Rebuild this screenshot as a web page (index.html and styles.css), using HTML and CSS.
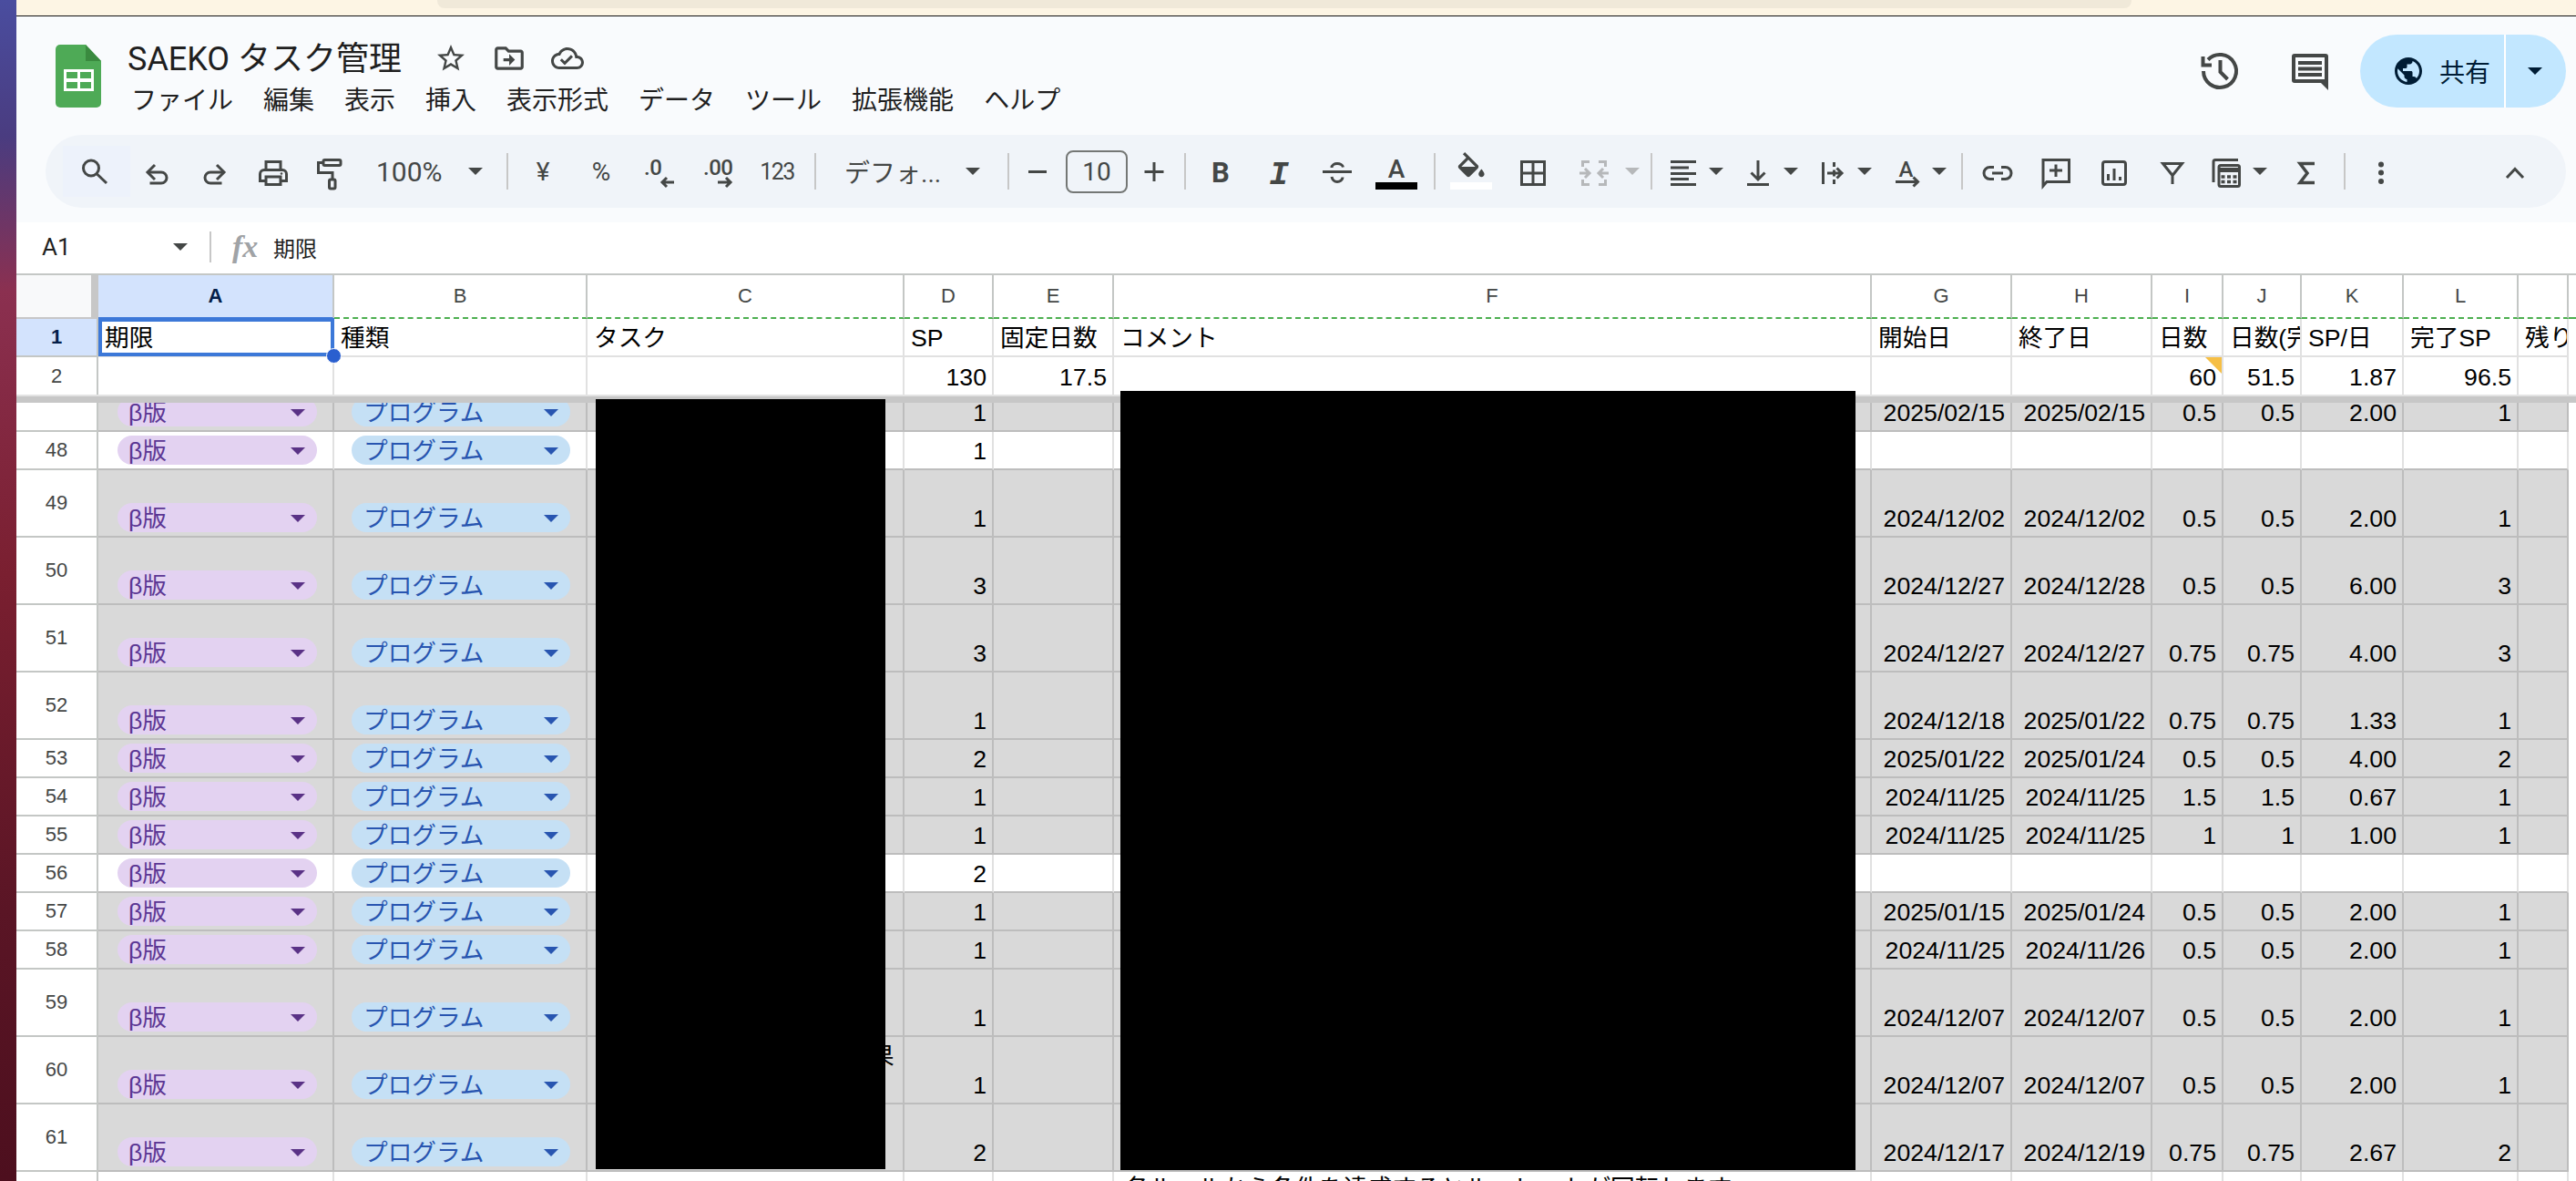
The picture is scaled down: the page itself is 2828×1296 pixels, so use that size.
FILE: index.html
```html
<!DOCTYPE html>
<html lang="ja">
<head>
<meta charset="utf-8">
<title>SAEKO タスク管理</title>
<link rel="stylesheet" href="styles.css">
</head>
<body>
<div class="strip"></div>
<main class="main">
  <div class="banner"><div class="banner-bar"></div></div>
  <header class="head">
    <div class="appbar">
      <svg class="logo" viewBox="0 0 50 69"><path class="logo-body" d="M5 0H33L50 18V64a5 5 0 0 1-5 5H5a5 5 0 0 1-5-5V5a5 5 0 0 1 5-5z"/><path class="logo-fold" d="M33 0L50 18H33z"/><path class="logo-table" d="M9 27h33v24H9zM12 30v7h12v-7zM27 30v7h12v-7zM12 41v7h12v-7zM27 41v7h12v-7z"/></svg>
      <div class="names">
        <div class="title-row">
          <span class="title">SAEKO タスク管理</span>
          <svg class="ticon star" viewBox="0 0 24 24"><path d="M22 9.24l-7.19-.62L12 2 9.19 8.63 2 9.24l5.46 4.73L5.82 21 12 17.27 18.18 21l-1.63-7.03L22 9.24zM12 15.4l-3.76 2.27 1-4.28-3.32-2.88 4.38-.38L12 6.1l1.71 4.04 4.38.38-3.32 2.88 1 4.28L12 15.4z"/></svg>
          <svg class="ticon folder" viewBox="0 0 24 24"><path d="M20 6h-8l-2-2H4c-1.11 0-1.99.89-1.99 2L2 18c0 1.11.89 2 2 2h16c1.11 0 2-.89 2-2V8c0-1.11-.89-2-2-2zm0 12H4V6h5.17l2 2H20v10zM12.01 12H8v2h4.01v3L16 13l-3.99-4z"/></svg>
          <svg class="ticon cloud" viewBox="0 0 24 24"><path d="M19.35 10.04C18.67 6.59 15.64 4 12 4 9.11 4 6.6 5.64 5.35 8.04 2.34 8.36 0 10.91 0 14c0 3.31 2.69 6 6 6h13c2.76 0 5-2.24 5-5 0-2.64-2.05-4.78-4.65-4.96zM19 18H6c-2.21 0-4-1.79-4-4 0-2.05 1.53-3.76 3.56-3.97l1.07-.11.5-.95C8.08 7.14 9.94 6 12 6c2.62 0 4.88 1.86 5.39 4.43l.3 1.5 1.53.11c1.56.1 2.78 1.41 2.78 2.96 0 1.65-1.35 3-3 3zm-9-3.82l-2.09-2.09L6.5 13.5 10 17l6.01-6.01-1.41-1.41z"/></svg>
        </div>
        <nav class="menu"><span>ファイル</span><span>編集</span><span>表示</span><span>挿入</span><span>表示形式</span><span>データ</span><span>ツール</span><span>拡張機能</span><span>ヘルプ</span></nav>
      </div>
      <div class="actions">
        <svg class="ic hist" viewBox="0 0 48 48"><path d="M11 11.5A18 18 0 1 1 6 24"/><path d="M5.5 8v9.5H15"/><path d="M24.5 12v13l8 8"/></svg>
        <svg class="ic comm" viewBox="0 0 48 48"><path class="dk" fill-rule="evenodd" d="M7 5h34a3 3 0 0 1 3 3v37l-8-8H7a3 3 0 0 1-3-3V8a3 3 0 0 1 3-3zM8 9v24h32V9z"/><path class="dk" d="M11 13h26v4H11zM11 19.5h26v4H11zM11 26h26v4H11z"/></svg>
        <div class="share">
          <div class="share-main">
            <svg class="globe" viewBox="0 0 24 24"><path d="M12 2C6.48 2 2 6.48 2 12s4.48 10 10 10 10-4.48 10-10S17.52 2 12 2zm-1 17.93c-3.95-.49-7-3.85-7-7.93 0-.62.08-1.21.21-1.79L9 15v1c0 1.1.9 2 2 2v1.93zm6.9-2.54c-.26-.81-1-1.39-1.9-1.39h-1v-3c0-.55-.45-1-1-1H8v-2h2c.55 0 1-.45 1-1V7h2c1.1 0 2-.9 2-2v-.41c2.93 1.19 5 4.06 5 7.41 0 2.08-.8 3.97-2.1 5.39z"/></svg>
            <span>共有</span>
          </div>
          <div class="share-more"><i class="tri tri-dark"></i></div>
        </div>
      </div>
    </div>

    <div class="toolbar">
      <div class="b64 search"><svg class="ic" viewBox="0 0 48 48"><circle cx="20" cy="20.5" r="8.5"/><path d="M26.5 27 37 37"/></svg></div>
      <div class="b64 ml4"><svg class="ic" viewBox="0 0 48 48"><path d="M22 17l-8 8 8 8"/><path d="M14.5 25H29a6 6 0 0 1 0 12H16.5"/></svg></div>
      <div class="b64"><svg class="ic" viewBox="0 0 48 48"><path d="M26 17l8 8-8 8"/><path d="M33.5 25H19a6 6 0 0 0 0 12h12.5"/></svg></div>
      <div class="b64"><svg class="ic" viewBox="0 0 48 48"><path d="M16 22v-8.5h16V22"/><path d="M16 34.5H9.5V27a4.5 4.5 0 0 1 4.5-4.5h20a4.5 4.5 0 0 1 4.500 4.500v7.500H32"/><path d="M16 30h16v8.5H16z"/><circle class="dk" cx="33" cy="26.5" r="1.3"/></svg></div>
      <div class="b64"><svg class="ic" viewBox="0 0 48 48"><rect x="15" y="11.5" width="19" height="6" rx="1.5"/><path d="M15 14.5H9.5v11H25v7.5"/><rect x="21.5" y="33" width="6.5" height="10" rx="1.5"/></svg></div>
      <div class="zoom"><span>100%</span><i class="tri"></i></div>
      <div class="sep ml16"></div>
      <div class="b64 ml6 tb-text">¥</div>
      <div class="b64 tb-text">%</div>
      <div class="b64"><svg class="ic" viewBox="0 0 48 48"><text class="svt dec" x="7" y="28">.0</text><path d="M40 36H27m5-5-5 5 5 5"/></svg></div>
      <div class="b64"><svg class="ic" viewBox="0 0 48 48"><text class="svt dec" x="8" y="28">.00</text><path d="M24 36h14m-5-5 5 5-5 5"/></svg></div>
      <div class="b64 tb-num">123</div>
      <div class="sep ml10"></div>
      <div class="fontsel ml16"><span>デフォ...</span><i class="tri"></i></div>
      <div class="sep ml20"></div>
      <div class="minus"><svg class="ic" viewBox="0 0 48 48"><path d="M14 24.5h20"/></svg></div>
      <div class="sizebox">10</div>
      <div class="plus"><svg class="ic" viewBox="0 0 48 48"><path d="M13.5 24.5h21M24 14v21"/></svg></div>
      <div class="sep ml4"></div>
      <div class="b64 ml6"><svg class="ic" viewBox="0 0 48 48"><text class="svt bold" x="24" y="36">B</text></svg></div>
      <div class="b64"><svg class="ic" viewBox="0 0 48 48"><text class="svt ital" x="24" y="38">I</text></svg></div>
      <div class="b64"><svg class="ic" viewBox="0 0 48 48"><path d="M8 24.5h32"/><path d="M18 20c0-3 3-4.5 6-4.5s6 1.5 6.5 4"/><path d="M18 30c.5 3 3 5.5 6 5.5s6-2 6-5"/></svg></div>
      <div class="b64"><svg class="ic" viewBox="0 0 48 48"><text class="svt colA" x="25" y="31">A</text><rect class="swatch-k" x="2" y="36" width="46" height="8"/></svg></div>
      <div class="sep ml10"></div>
      <div class="b64 ml7"><svg class="ic" viewBox="0 0 48 48"><path class="dk" transform="translate(5 3) scale(1.6)" d="M16.56 8.94L7.62 0 6.21 1.41l2.38 2.38-5.15 5.15c-.59.59-.59 1.54 0 2.12l5.5 5.5c.29.29.68.44 1.06.44s.77-.15 1.06-.44l5.5-5.5c.59-.58.59-1.53 0-2.12zM5.21 10L10 5.21 14.79 10H5.21zM19 11.5s-2 2.17-2 3.5c0 1.1.9 2 2 2s2-.9 2-2c0-1.33-2-3.5-2-3.5z"/><rect class="swatch-w" x="1" y="36" width="46" height="8"/></svg></div>
      <div class="b64 ml4"><svg class="ic" viewBox="0 0 48 48"><path d="M11.5 13.5h25v25h-25zM24 13.5v25M11.5 26h25"/></svg></div>
      <div class="b64 ml3"><svg class="ic off" viewBox="0 0 48 48"><path d="M19 13.5h-7.5V19M11.5 33v5.5H19M29 13.5h7.5V19M36.5 33v5.5H29"/><path d="M8 26h10m-4-5 5 5-5 5M40 26H30m4-5-5 5 5 5"/></svg></div>
      <div class="car20"><i class="tri tri-off"></i></div>
      <div class="sep ml10"></div>
      <div class="b48 ml10"><svg class="ic" viewBox="0 0 48 48"><path d="M10 13.5h28M10 20h20M10 26.5h28M10 32.5h20M10 38.5h28"/></svg></div>
      <div class="car24"><i class="tri"></i></div>
      <div class="b48 ml10"><svg class="ic" viewBox="0 0 48 48"><path d="M24 12v21M16.5 25.5 24 33l7.5-7.5M12 38.5h24"/></svg></div>
      <div class="car24"><i class="tri"></i></div>
      <div class="b48 ml9"><svg class="ic" viewBox="0 0 48 48"><path d="M14.5 14v24M26.5 14v5M26.5 33v5M26.5 22.5v7M19 26h16M29.5 20.5 35 26l-5.5 5.500"/></svg></div>
      <div class="car24"><i class="tri"></i></div>
      <div class="b48 ml10"><svg class="ic" viewBox="0 0 48 48"><text class="svt rota" x="23.5" y="29.5">A</text><path d="M12 35.5h24M31.5 30.5l5 5-5 5"/></svg></div>
      <div class="car24"><i class="tri"></i></div>
      <div class="sep ml12"></div>
      <div class="b64 ml6"><svg class="ic" viewBox="0 0 48 48"><path d="M20 19.5h-4.500a6.500 6.500 0 0 0 0 13H20M28 19.500h4.500a6.500 6.500 0 0 1 0 13H28M18 26h12"/></svg></div>
      <div class="b64"><svg class="ic" viewBox="0 0 48 48"><path d="M10 11.5h28.500v24H14L10 40z"/><path d="M24 16.5v13.500M17 23h14"/></svg></div>
      <div class="b64"><svg class="ic" viewBox="0 0 48 48"><rect x="11.5" y="13.5" width="25" height="25" rx="2.5"/><path d="M17.5 27v7M24 21v13M30.5 30v4"/></svg></div>
      <div class="b64"><svg class="ic" viewBox="0 0 48 48"><path d="M13.5 15.5h21L24 28.5zM24 28v10"/></svg></div>
      <div class="b48 ml2"><svg class="ic" viewBox="0 0 48 48"><path d="M38 11.5H13a2 2 0 0 0-2 2V36"/><rect x="17" y="17.5" width="22.5" height="23" rx="2"/><path d="M17 21.5h22M17 23.5h22"/><path class="thin" d="M19.5 30h17M19.5 35.5h17" stroke-dasharray="4 2.5"/></svg></div>
      <div class="car24 ml2"><i class="tri"></i></div>
      <div class="b64 ml7"><svg class="ic" viewBox="0 0 48 48"><path class="sig" d="M33 15.5H17l8 10.5-8 10.5h16"/></svg></div>
      <div class="sep ml9"></div>
      <div class="b64 ml7"><svg class="ic" viewBox="0 0 48 48"><circle class="dk" cx="24" cy="16.5" r="3"/><circle class="dk" cx="24" cy="25.5" r="3"/><circle class="dk" cx="24" cy="35" r="3"/></svg></div>
      <div class="b64 collapse"><svg class="ic" viewBox="0 0 48 48"><path d="M15 31l9-9.5 9 9.5"/></svg></div>
    </div>
  </header>

  <div class="formula">
    <span class="cellref">A1</span><i class="tri fx-tri"></i>
    <div class="fx-sep"></div>
    <span class="fx">fx</span>
    <span class="fx-val">期限</span>
  </div>

  <section class="sheet">
    <div class="row rowhead">
      <div class="corner"></div>
      <div class="ch sel">A</div><div class="ch">B</div><div class="ch">C</div><div class="ch">D</div><div class="ch">E</div><div class="ch">F</div><div class="ch">G</div><div class="ch">H</div><div class="ch">I</div><div class="ch">J</div><div class="ch">K</div><div class="ch">L</div><div class="ch"></div><div class="ch end"></div>
    </div>
    <div class="row r42 plain">
      <div class="rh sel">1</div>
      <div class="c a1">期限<div class="selbox"></div><div class="handle"></div></div><div class="c">種類</div><div class="c">タスク</div><div class="c">SP</div><div class="c">固定日数</div><div class="c">コメント</div><div class="c">開始日</div><div class="c">終了日</div><div class="c">日数</div><div class="c">日数(完</div><div class="c">SP/日</div><div class="c">完了SP</div><div class="c">残り</div><div class="e"></div>
    </div>
    <div class="row r41 plain">
      <div class="rh nb">2</div>
      <div class="c nb"></div><div class="c nb"></div><div class="c nb"></div><div class="c n nb">130</div><div class="c n nb">17.5</div><div class="c nb"></div><div class="c nb"></div><div class="c nb"></div><div class="c n nb note">60</div><div class="c n nb">51.5</div><div class="c n nb">1.87</div><div class="c n nb">96.5</div><div class="c nb"></div><div class="e"></div>
    </div>
    <div class="freeze"></div>

    <div class="row r32 gray"><div class="rh"></div><div class="c chip-a"><span class="chip pu">β版<i class="tri"></i></span></div><div class="c chip-b"><span class="chip bl">プログラム<i class="tri"></i></span></div><div class="c"></div><div class="c n">1</div><div class="c"></div><div class="c"></div><div class="c n">2025/02/15</div><div class="c n">2025/02/15</div><div class="c n">0.5</div><div class="c n">0.5</div><div class="c n">2.00</div><div class="c n">1</div><div class="c"></div><div class="e"></div></div>
    <div class="row r42 wht"><div class="rh">48</div><div class="c chip-a"><span class="chip pu">β版<i class="tri"></i></span></div><div class="c chip-b"><span class="chip bl">プログラム<i class="tri"></i></span></div><div class="c"></div><div class="c n">1</div><div class="c"></div><div class="c"></div><div class="c"></div><div class="c"></div><div class="c"></div><div class="c"></div><div class="c"></div><div class="c"></div><div class="c"></div><div class="e"></div></div>
    <div class="row r74 gray"><div class="rh">49</div><div class="c chip-a"><span class="chip pu">β版<i class="tri"></i></span></div><div class="c chip-b"><span class="chip bl">プログラム<i class="tri"></i></span></div><div class="c"></div><div class="c n">1</div><div class="c"></div><div class="c"></div><div class="c n">2024/12/02</div><div class="c n">2024/12/02</div><div class="c n">0.5</div><div class="c n">0.5</div><div class="c n">2.00</div><div class="c n">1</div><div class="c"></div><div class="e"></div></div>
    <div class="row r74 gray"><div class="rh">50</div><div class="c chip-a"><span class="chip pu">β版<i class="tri"></i></span></div><div class="c chip-b"><span class="chip bl">プログラム<i class="tri"></i></span></div><div class="c"></div><div class="c n">3</div><div class="c"></div><div class="c"></div><div class="c n">2024/12/27</div><div class="c n">2024/12/28</div><div class="c n">0.5</div><div class="c n">0.5</div><div class="c n">6.00</div><div class="c n">3</div><div class="c"></div><div class="e"></div></div>
    <div class="row r74 gray"><div class="rh">51</div><div class="c chip-a"><span class="chip pu">β版<i class="tri"></i></span></div><div class="c chip-b"><span class="chip bl">プログラム<i class="tri"></i></span></div><div class="c"></div><div class="c n">3</div><div class="c"></div><div class="c"></div><div class="c n">2024/12/27</div><div class="c n">2024/12/27</div><div class="c n">0.75</div><div class="c n">0.75</div><div class="c n">4.00</div><div class="c n">3</div><div class="c"></div><div class="e"></div></div>
    <div class="row r74 gray"><div class="rh">52</div><div class="c chip-a"><span class="chip pu">β版<i class="tri"></i></span></div><div class="c chip-b"><span class="chip bl">プログラム<i class="tri"></i></span></div><div class="c"></div><div class="c n">1</div><div class="c"></div><div class="c"></div><div class="c n">2024/12/18</div><div class="c n">2025/01/22</div><div class="c n">0.75</div><div class="c n">0.75</div><div class="c n">1.33</div><div class="c n">1</div><div class="c"></div><div class="e"></div></div>
    <div class="row r42 gray"><div class="rh">53</div><div class="c chip-a"><span class="chip pu">β版<i class="tri"></i></span></div><div class="c chip-b"><span class="chip bl">プログラム<i class="tri"></i></span></div><div class="c"></div><div class="c n">2</div><div class="c"></div><div class="c"></div><div class="c n">2025/01/22</div><div class="c n">2025/01/24</div><div class="c n">0.5</div><div class="c n">0.5</div><div class="c n">4.00</div><div class="c n">2</div><div class="c"></div><div class="e"></div></div>
    <div class="row r42 gray"><div class="rh">54</div><div class="c chip-a"><span class="chip pu">β版<i class="tri"></i></span></div><div class="c chip-b"><span class="chip bl">プログラム<i class="tri"></i></span></div><div class="c"></div><div class="c n">1</div><div class="c"></div><div class="c"></div><div class="c n">2024/11/25</div><div class="c n">2024/11/25</div><div class="c n">1.5</div><div class="c n">1.5</div><div class="c n">0.67</div><div class="c n">1</div><div class="c"></div><div class="e"></div></div>
    <div class="row r42 gray"><div class="rh">55</div><div class="c chip-a"><span class="chip pu">β版<i class="tri"></i></span></div><div class="c chip-b"><span class="chip bl">プログラム<i class="tri"></i></span></div><div class="c"></div><div class="c n">1</div><div class="c"></div><div class="c"></div><div class="c n">2024/11/25</div><div class="c n">2024/11/25</div><div class="c n">1</div><div class="c n">1</div><div class="c n">1.00</div><div class="c n">1</div><div class="c"></div><div class="e"></div></div>
    <div class="row r42 wht"><div class="rh">56</div><div class="c chip-a"><span class="chip pu">β版<i class="tri"></i></span></div><div class="c chip-b"><span class="chip bl">プログラム<i class="tri"></i></span></div><div class="c"></div><div class="c n">2</div><div class="c"></div><div class="c"></div><div class="c"></div><div class="c"></div><div class="c"></div><div class="c"></div><div class="c"></div><div class="c"></div><div class="c"></div><div class="e"></div></div>
    <div class="row r42 gray"><div class="rh">57</div><div class="c chip-a"><span class="chip pu">β版<i class="tri"></i></span></div><div class="c chip-b"><span class="chip bl">プログラム<i class="tri"></i></span></div><div class="c"></div><div class="c n">1</div><div class="c"></div><div class="c"></div><div class="c n">2025/01/15</div><div class="c n">2025/01/24</div><div class="c n">0.5</div><div class="c n">0.5</div><div class="c n">2.00</div><div class="c n">1</div><div class="c"></div><div class="e"></div></div>
    <div class="row r42 gray"><div class="rh">58</div><div class="c chip-a"><span class="chip pu">β版<i class="tri"></i></span></div><div class="c chip-b"><span class="chip bl">プログラム<i class="tri"></i></span></div><div class="c"></div><div class="c n">1</div><div class="c"></div><div class="c"></div><div class="c n">2024/11/25</div><div class="c n">2024/11/26</div><div class="c n">0.5</div><div class="c n">0.5</div><div class="c n">2.00</div><div class="c n">1</div><div class="c"></div><div class="e"></div></div>
    <div class="row r74 gray"><div class="rh">59</div><div class="c chip-a"><span class="chip pu">β版<i class="tri"></i></span></div><div class="c chip-b"><span class="chip bl">プログラム<i class="tri"></i></span></div><div class="c"></div><div class="c n">1</div><div class="c"></div><div class="c"></div><div class="c n">2024/12/07</div><div class="c n">2024/12/07</div><div class="c n">0.5</div><div class="c n">0.5</div><div class="c n">2.00</div><div class="c n">1</div><div class="c"></div><div class="e"></div></div>
    <div class="row r74 gray"><div class="rh">60</div><div class="c chip-a"><span class="chip pu">β版<i class="tri"></i></span></div><div class="c chip-b"><span class="chip bl">プログラム<i class="tri"></i></span></div><div class="c wrapend">果</div><div class="c n">1</div><div class="c"></div><div class="c"></div><div class="c n">2024/12/07</div><div class="c n">2024/12/07</div><div class="c n">0.5</div><div class="c n">0.5</div><div class="c n">2.00</div><div class="c n">1</div><div class="c"></div><div class="e"></div></div>
    <div class="row r74 gray"><div class="rh">61</div><div class="c chip-a"><span class="chip pu">β版<i class="tri"></i></span></div><div class="c chip-b"><span class="chip bl">プログラム<i class="tri"></i></span></div><div class="c"></div><div class="c n">2</div><div class="c"></div><div class="c"></div><div class="c n">2024/12/17</div><div class="c n">2024/12/19</div><div class="c n">0.75</div><div class="c n">0.75</div><div class="c n">2.67</div><div class="c n">2</div><div class="c"></div><div class="e"></div></div>
    <div class="row r74 wht"><div class="rh"></div><div class="c"></div><div class="c"></div><div class="c"></div><div class="c"></div><div class="c"></div><div class="c toptext">各ルールから条件を達成するとルーレットが回転します</div><div class="c"></div><div class="c"></div><div class="c"></div><div class="c"></div><div class="c"></div><div class="c"></div><div class="c"></div><div class="e"></div></div>

    <div class="mask mask-c"></div>
    <div class="mask mask-f"></div>
  </section>
</main>
</body>
</html>
```

FILE: styles.css
```css
* { box-sizing: border-box; }
html, body { margin: 0; padding: 0; height: 1296px; overflow: hidden; background: #fff; }
body { display: flex; font-family: "Roboto", "Noto Sans CJK JP", sans-serif; color: #1f1f1f; }
i { font-style: normal; }

.strip { width: 18px; height: 1296px; flex: none; background: linear-gradient(180deg, #4a4d9f 0, #4a3c80 150px, #8b3050 320px, #7a1f30 630px, #5a1525 1000px, #4d0f1e 1296px); }
.main { width: 2810px; flex: none; display: flex; flex-direction: column; height: 1296px; }

.banner { height: 18px; flex: none; background: #fdf5e4; border-bottom: 1px solid #111; }
.banner-bar { margin-left: 462px; width: 1860px; height: 9px; background: #f0e9d9; border-radius: 0 0 8px 8px; }

.head { height: 226px; flex: none; background: #f9fbfd; }
.appbar { height: 130px; display: flex; }
.logo { width: 50px; height: 69px; margin: 31px 0 0 43px; flex: none; }
.logo-body { fill: #4eaa56; }
.logo-fold { fill: #3a8a3f; }
.logo-table { fill: #fff; fill-rule: evenodd; }

.names { margin-left: 29px; padding-top: 24px; }
.title-row { height: 44px; display: flex; align-items: center; }
.title { font-size: 36px; line-height: 44px; padding-top: 2px; color: #1f1f1f; white-space: nowrap; }
.ticon { flex: none; fill: #444746; margin-top: 0; }
.star { width: 36px; height: 36px; margin-left: 36px; }
.folder { width: 38px; height: 38px; margin-left: 27px; }
.cloud { width: 36px; height: 36px; margin-left: 27px; }
.menu { display: flex; gap: 33px; height: 44px; margin-left: 4px; font-size: 28px; line-height: 44px; color: #1f1f1f; font-family: "Noto Sans CJK JP", sans-serif; white-space: nowrap; }

.actions { margin-left: auto; display: flex; align-items: flex-start; padding: 20px 11px 0 0; }
.ic.hist { margin-top: 16px; stroke-width: 4; }
.comm { margin: 16px 31px 0 51px; }
.share { width: 226px; height: 80px; display: flex; background: #c2e7ff; border-radius: 40px; color: #001d35; overflow: hidden; }
.share-main { width: 160px; display: flex; align-items: center; padding-left: 35px; font-size: 28px; font-family: "Noto Sans CJK JP", sans-serif; border-right: 2px solid #fff; }
.globe { width: 36px; height: 36px; fill: #001d35; margin-right: 16px; flex: none; }
.share-more { flex: 1; display: flex; align-items: center; justify-content: center; padding-right: 2px; }

.toolbar { width: 2767px; height: 80px; margin-left: 32px; padding: 0 24px 0 22px; background: #f0f4f9; border-radius: 40px; display: flex; align-items: center; }
.ic { width: 48px; height: 48px; flex: none; fill: none; stroke: #444746; stroke-width: 3; overflow: visible; }
.ic .dk { fill: #444746; stroke: none; }
.ic.off { stroke: #b6b8ba; }
.ic .thin { stroke-width: 3.5; }
.ic .sig { stroke-width: 3.5; }
.swatch-k { fill: #000; stroke: none; }
.swatch-w { fill: #fff; stroke: none; }
.svt { fill: #444746; stroke: none; font-family: "Roboto", sans-serif; }
.dec { font-size: 24px; font-weight: 500; letter-spacing: -.5px; }
.bold { font-size: 31px; font-weight: 700; text-anchor: middle; }
.ital { font-family: "Liberation Mono", monospace; font-size: 36px; font-weight: 700; font-style: italic; text-anchor: middle; }
.colA { font-size: 28px; font-weight: 500; text-anchor: middle; }
.rota { font-size: 24px; font-weight: 500; text-anchor: middle; }

.b64, .b48, .minus, .plus, .car20, .car24 { display: flex; align-items: center; justify-content: center; flex: none; height: 48px; }
.b64 { width: 64px; }
.b48 { width: 48px; }
.minus { width: 62px; }
.plus { width: 58px; }
.car20 { width: 20px; }
.car24 { width: 24px; }
.tb-text { font-size: 28px; color: #444746; }
.tb-num { font-size: 25px; letter-spacing: -1.5px; color: #444746; padding-left: 2px; }
.search { position: relative; }
.search::before { content: ""; position: absolute; left: -3px; top: -4px; width: 74px; height: 56px; background: #edf2fb; }
.search .ic { position: relative; }
.collapse { margin-left: auto; }

.ml2 { margin-left: 2px; }
.ml3 { margin-left: 3px; }
.ml4 { margin-left: 4px; }
.ml6 { margin-left: 6px; }
.ml7 { margin-left: 7px; }
.ml9 { margin-left: 9px; }
.ml10 { margin-left: 10px; }
.ml12 { margin-left: 12px; }
.ml16 { margin-left: 16px; }
.ml20 { margin-left: 20px; }

.sep { width: 2px; height: 40px; flex: none; background: #c7c7c7; }
.tri { display: block; width: 0; height: 0; flex: none; border-left: 8px solid transparent; border-right: 8px solid transparent; border-top: 8px solid #444746; }
.tri-dark { border-top-color: #001d35; }
.tri-off { border-top-color: #b6b8ba; }

.zoom { width: 144px; height: 48px; flex: none; display: flex; align-items: center; justify-content: space-between; padding: 0 10px 0 17px; font-size: 30px; color: #444746; }
.fontsel { width: 174px; height: 48px; flex: none; display: flex; align-items: center; justify-content: space-between; padding: 0 10px 0 15px; font-size: 28px; color: #444746; white-space: nowrap; }
.sizebox { width: 68px; height: 47px; flex: none; border: 2px solid #747775; border-radius: 8px; display: flex; align-items: center; justify-content: center; font-size: 28px; color: #444746; }

.formula { height: 56px; flex: none; background: #fff; display: flex; align-items: center; padding-bottom: 2px; white-space: nowrap; }
.cellref { width: 172px; padding-left: 28px; font-size: 26px; color: #1f1f1f; flex: none; }
.fx-tri { margin-right: 24px; }
.fx-sep { width: 2px; height: 34px; background: #c7c7c7; flex: none; }
.fx { width: 70px; padding-left: 23px; font-family: "Liberation Serif", serif; font-style: italic; font-size: 34px; font-weight: 700; color: #a0a3a6; flex: none; }
.fx-val { margin-left: -2px; font-size: 24px; font-family: "Noto Sans CJK JP", sans-serif; color: #1f1f1f; }

.sheet { position: relative; flex: 1; overflow: hidden; border-top: 2px solid #c4c7c5; font-family: "Liberation Sans", "Noto Sans CJK JP", sans-serif; background: #fff; }
.row { display: grid; grid-template-columns: 90px 259px 278px 348px 98px 132px 832px 154px 154px 78px 86px 112px 126px 55px 8px; overflow: hidden; }
.rowhead { height: 48px; }
.r32 { height: 32px; }
.r41 { height: 41px; }
.r42 { height: 42px; }
.r74 { height: 74px; }

.corner { background: #f8f9fa; border-right: 8px solid #c7c7c7; border-bottom: 2px solid #c7c7c7; }
.ch { display: flex; align-items: center; justify-content: center; font-size: 22px; color: #444746; background: #fff; border-right: 2px solid #c4c7c5; border-bottom: 2px dashed #4caf50; }
.ch.sel { background: #d3e3fd; color: #041e49; font-weight: 700; border-bottom: 2px solid #3c78d8; }
.ch.end { border-right: 0; }

.rh { display: flex; align-items: center; justify-content: center; font-size: 22px; color: #444746; background: #fff; border-right: 2px solid #c4c7c5; border-bottom: 2px solid #c4c7c5; }
.rh.sel { background: #d3e3fd; color: #041e49; font-weight: 700; }
.rh.nb { border-bottom: 0; }

.c { display: flex; align-items: flex-end; overflow: hidden; white-space: nowrap; padding: 0 6px 4px 7px; font-size: 26.67px; line-height: 30px; color: #000; border-right: 2px solid #bdbdbd; border-bottom: 2px solid #bdbdbd; min-width: 0; }
.c.n { justify-content: flex-end; }
.gray .c { background: #d9d9d9; }
.plain .c { border-color: #e1e1e1; }
.wht .c { border-right-color: #e1e1e1; }
.plain .c.nb { border-bottom: 0; }
.e { background: #fff; }

.a1 { position: relative; overflow: visible; }
.selbox { position: absolute; left: 0; top: -1px; right: -2px; bottom: -1px; border: 4px solid #3c78d8; pointer-events: none; }
.handle { position: absolute; right: -10px; bottom: -9px; width: 17px; height: 17px; border-radius: 50%; background: #2a5fcf; border: 1px solid #fff; z-index: 2; }
.plain { overflow: visible; }
.note { position: relative; }
.note::after { content: ""; position: absolute; top: 0; right: 0; border-top: 18px solid #f6bf45; border-left: 18px solid transparent; }

.freeze { height: 9px; background: #c7c7c7; border-top: 2px solid #e3e3e3; }

.chip-a, .chip-b { padding: 0 0 4px 0; }
.chip-a { padding-left: 21px; }
.chip-b { padding-left: 19px; }
.chip { display: flex; align-items: center; justify-content: space-between; flex: none; height: 32px; border-radius: 16px; padding: 2px 13px 0 12px; line-height: 30px; }
.chip-a .chip { width: 219px; }
.chip-b .chip { width: 240px; padding-left: 13px; }
.pu { background: #e3d2f1; color: #5b3694; }
.pu .tri { border-top-color: #5a3286; }
.bl { background: #c5e0f5; color: #2855b0; }
.bl .tri { border-top-color: #2855b0; }

.wrapend { align-items: flex-start; padding-left: 310px; padding-top: 6px; }
.toptext { align-items: flex-start; padding-left: 12px; padding-top: 3px; }

.mask { position: absolute; background: #000; z-index: 3; }
.mask-c { left: 636px; top: 136px; width: 318px; height: 845px; }
.mask-f { left: 1212px; top: 127px; width: 807px; height: 855px; }
```
